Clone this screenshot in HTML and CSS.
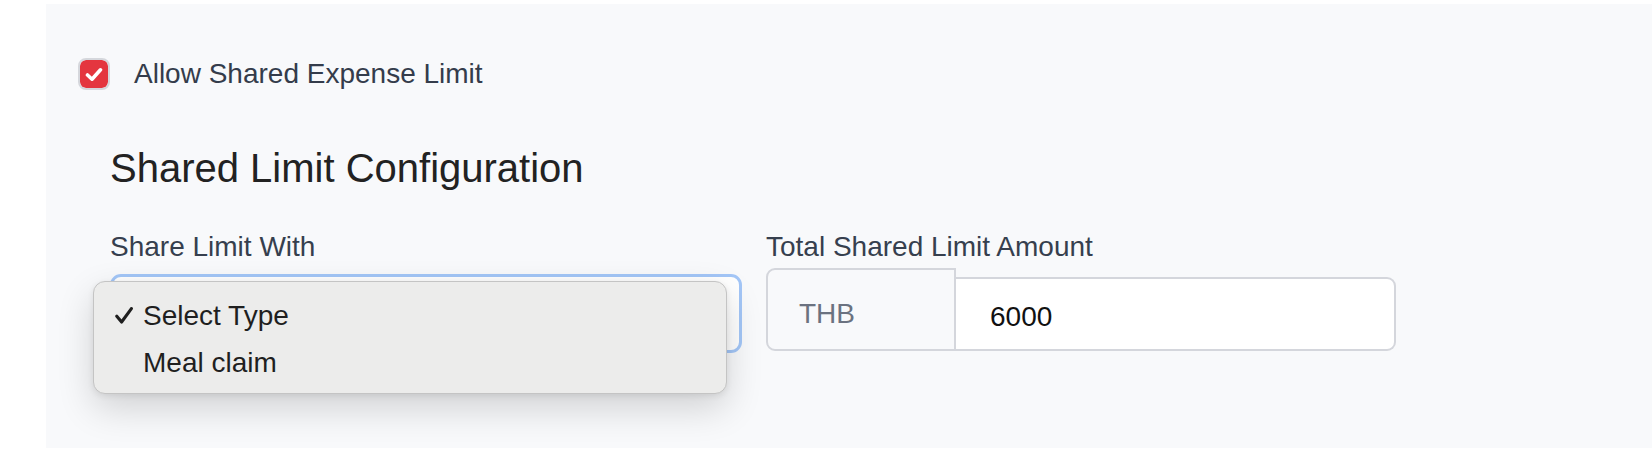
FILE: index.html
```html
<!DOCTYPE html>
<html lang="en">
<head>
<meta charset="utf-8">
<title>Shared Expense Limit</title>
<link rel="stylesheet" href="styles.css">
</head>
<body>
<div class="panel">
  <label class="check-row">
    <span class="checkbox">
      <svg class="checkbox-mark" width="18" height="15" viewBox="0 0 18 15"><path d="M2.5 8 L7 12.2 L15.5 2.8" fill="none" stroke="#ffffff" stroke-width="3.6" stroke-linecap="round" stroke-linejoin="round"/></svg>
    </span>
    <span class="check-label">Allow Shared Expense Limit</span>
  </label>
  <section class="config">
    <h2 class="config-title">Shared Limit Configuration</h2>
    <div class="fields">
      <div class="field">
        <div class="field-label">Share Limit With</div>
        <div class="select-wrap">
          <div class="select"></div>
          <ul class="menu">
            <li class="menu-item"><span class="tick-slot"><svg width="18" height="17" viewBox="0 0 18 17"><path d="M1.8 9.2 L6.6 15 L16.4 1.6" fill="none" stroke="#1f1f1f" stroke-width="3.1" stroke-linecap="round" stroke-linejoin="round"/></svg></span>Select Type</li>
            <li class="menu-item"><span class="tick-slot"></span>Meal claim</li>
          </ul>
        </div>
      </div>
      <div class="field">
        <div class="field-label">Total Shared Limit Amount</div>
        <div class="input-group">
          <span class="addon">THB</span>
          <span class="input">6000</span>
        </div>
      </div>
    </div>
  </section>
</div>
</body>
</html>
```
FILE: styles.css
```css
html, body {
  margin: 0;
  padding: 0;
  background: #ffffff;
}

body {
  font-family: "Liberation Sans", Arial, Helvetica, sans-serif;
  width: 1652px;
  height: 450px;
  overflow: hidden;
}

.panel {
  box-sizing: border-box;
  margin: 4px 0 0 46px;
  height: 444px;
  background: #f8f9fb;
  padding: 54px 0 0 32px;
}

.check-row {
  display: flex;
  align-items: center;
  gap: 24px;
  height: 32px;
}

.checkbox {
  box-sizing: border-box;
  width: 32px;
  height: 32px;
  border: 2px solid #d5d7dc;
  border-radius: 8px;
  background: #e4363f;
  background-clip: padding-box;
  display: flex;
  align-items: center;
  justify-content: center;
}

.check-label {
  font-size: 28px;
  line-height: 32px;
  color: #343c4b;
}

.config {
  padding-left: 32px;
  margin-top: 54px;
}

.config-title {
  margin: 0;
  font-size: 40px;
  line-height: 48px;
  font-weight: 400;
  color: #222222;
}

.fields {
  margin-top: 39px;
  display: grid;
  grid-template-columns: 632px 630px;
  column-gap: 24px;
}

.field-label {
  font-size: 28px;
  line-height: 32px;
  color: #363f4e;
  margin-bottom: 5px;
}

.select-wrap {
  position: relative;
  padding-top: 6px;
}

.select {
  box-sizing: border-box;
  height: 79px;
  border: 3px solid #a3c6f7;
  border-radius: 11px;
  background: #ffffff;
}

.menu {
  position: absolute;
  left: -17px;
  top: 13px;
  box-sizing: border-box;
  width: 634px;
  height: 113px;
  margin: 0;
  padding: 10px 0 0 0;
  list-style: none;
  background: #ececeb;
  border: 1px solid #c4c4c4;
  border-radius: 12px;
  box-shadow: 0 14px 36px rgba(0, 0, 0, 0.16), 0 2px 6px rgba(0, 0, 0, 0.08);
}

.menu-item {
  display: flex;
  align-items: center;
  height: 47px;
  padding-left: 21px;
  font-size: 28px;
  line-height: 47px;
  color: #1f1f1f;
}

.tick-slot {
  display: flex;
  align-items: center;
  width: 18px;
  height: 17px;
  margin-right: 10px;
}

.input-group {
  display: flex;
  align-items: flex-end;
  height: 83px;
}

.addon {
  box-sizing: border-box;
  width: 190px;
  height: 83px;
  border: 2px solid #d4d6dc;
  border-radius: 9px 0 0 9px;
  background: #f8f9fb;
  padding: 28px 0 0 31px;
  font-size: 28px;
  line-height: 32px;
  color: #6b7280;
}

.input {
  box-sizing: border-box;
  flex: 1;
  height: 74px;
  border: 2px solid #d4d6dc;
  border-left: 0;
  border-radius: 0 9px 9px 0;
  background: #ffffff;
  padding: 22px 0 0 34px;
  font-size: 28px;
  line-height: 32px;
  color: #111111;
}
```
